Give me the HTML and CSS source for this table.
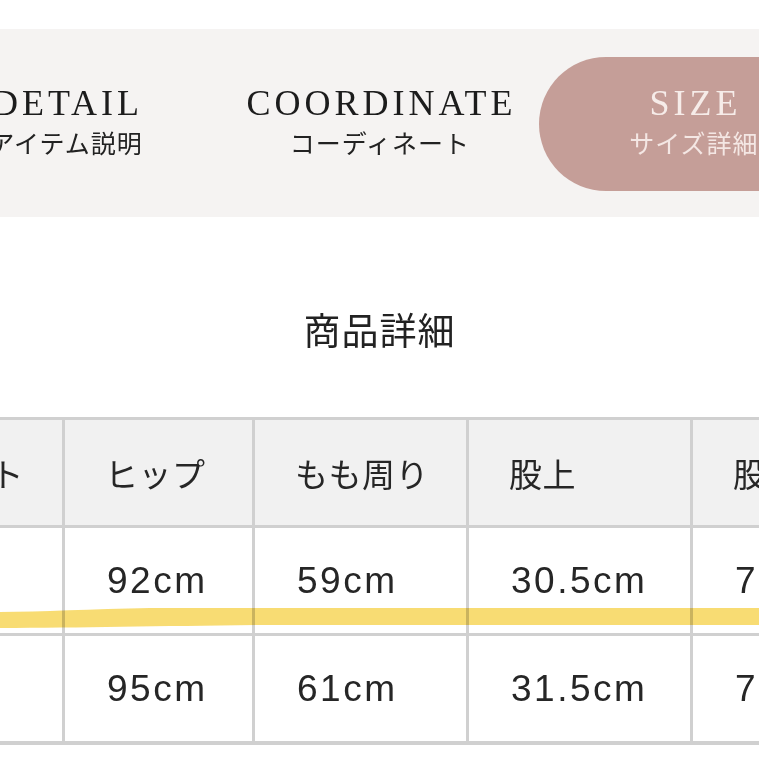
FILE: index.html
```html
<!DOCTYPE html>
<html lang="ja">
<head>
<meta charset="utf-8">
<link rel="stylesheet" href="styles.css">
</head>
<body>
<div class="page">
  <nav class="tabs">
    <div class="tab">
      <span class="tab-en">DETAIL</span>
      <span class="tab-ja">アイテム説明</span>
    </div>
    <div class="tab">
      <span class="tab-en">COORDINATE</span>
      <span class="tab-ja">コーディネート</span>
    </div>
    <div class="tab tab-active">
      <span class="tab-en">SIZE</span>
      <span class="tab-ja">サイズ詳細</span>
    </div>
  </nav>

  <h2 class="title">商品詳細</h2>

  <div class="size-table">
    <div class="cell head">ウエスト</div>
    <div class="cell head">ヒップ</div>
    <div class="cell head">もも周り</div>
    <div class="cell head">股上</div>
    <div class="cell head">股下</div>

    <div class="cell">64cm</div>
    <div class="cell">92cm</div>
    <div class="cell">59cm</div>
    <div class="cell">30.5cm</div>
    <div class="cell">75cm</div>

    <div class="cell">67cm</div>
    <div class="cell">95cm</div>
    <div class="cell">61cm</div>
    <div class="cell">31.5cm</div>
    <div class="cell">75cm</div>
  </div>

  <svg class="marker" width="759" height="759" viewBox="0 0 759 759" aria-hidden="true">
    <path d="M-2,612 C40,612 90,609 150,608 L761,608 L761,625 L260,625 C160,626 80,628 -2,628 Z" />
  </svg>
</div>
</body>
</html>
```

FILE: styles.css
```css
html, body {
  margin: 0;
  padding: 0;
  background: #ffffff;
}

body {
  width: 759px;
  height: 759px;
  overflow: hidden;
  font-family: "Noto Sans CJK JP", "Noto Sans", sans-serif;
  color: #2a2a2a;
}

.page {
  position: relative;
  width: 759px;
  height: 759px;
  overflow: hidden;
}

.tabs {
  margin-top: 29px;
  height: 188px;
  background: #f5f3f2;
  display: flex;
  justify-content: center;
  overflow: hidden;
}

.tab {
  flex: 0 0 310px;
  margin: 28px 2px 26px;
  border-radius: 67px;
  display: flex;
  flex-direction: column;
  align-items: center;
  justify-content: center;
  gap: 6px;
  padding-bottom: 6px;
}

.tab-en {
  font-family: "Liberation Serif", "DejaVu Serif", serif;
  font-size: 36px;
  line-height: 36px;
  letter-spacing: 4px;
  margin-right: -4px;
  color: #1c1c1c;
}

.tab-ja {
  font-family: "Noto Sans CJK JP", sans-serif;
  font-size: 25px;
  line-height: 30px;
  letter-spacing: 1px;
  margin-right: -1px;
  color: #222222;
}

.tab-active {
  background: #c59e98;
}

.tab-active .tab-en {
  color: #f6ece9;
}

.tab-active .tab-ja {
  color: #f4e7e4;
}

.title {
  margin: 93px 0 69px;
  font-family: "Noto Sans CJK JP", sans-serif;
  font-weight: 400;
  font-size: 37px;
  line-height: 38px;
  letter-spacing: 1px;
  text-align: center;
  color: #222222;
}

.size-table {
  margin-left: -150px;
  width: 1100px;
  display: grid;
  grid-template-columns: 212px 187px 211px 221px 240px;
  grid-auto-rows: 105px;
  gap: 3px;
  padding: 3px 0 4px;
  background: #d0d0d0;
}

.cell {
  background: #ffffff;
  display: flex;
  align-items: center;
  padding-left: 42px;
  font-family: "Liberation Sans", "Noto Sans CJK JP", sans-serif;
  font-size: 37px;
  letter-spacing: 2.5px;
  color: #262626;
}

.cell.head {
  background: #f1f1f1;
  font-family: "Noto Sans CJK JP", sans-serif;
  font-size: 33px;
  letter-spacing: 0.5px;
  padding-left: 40px;
}

.marker {
  position: absolute;
  left: 0;
  top: 0;
  pointer-events: none;
  mix-blend-mode: multiply;
}

.marker path {
  fill: #f8da6c;
  opacity: 0.95;
}
```
